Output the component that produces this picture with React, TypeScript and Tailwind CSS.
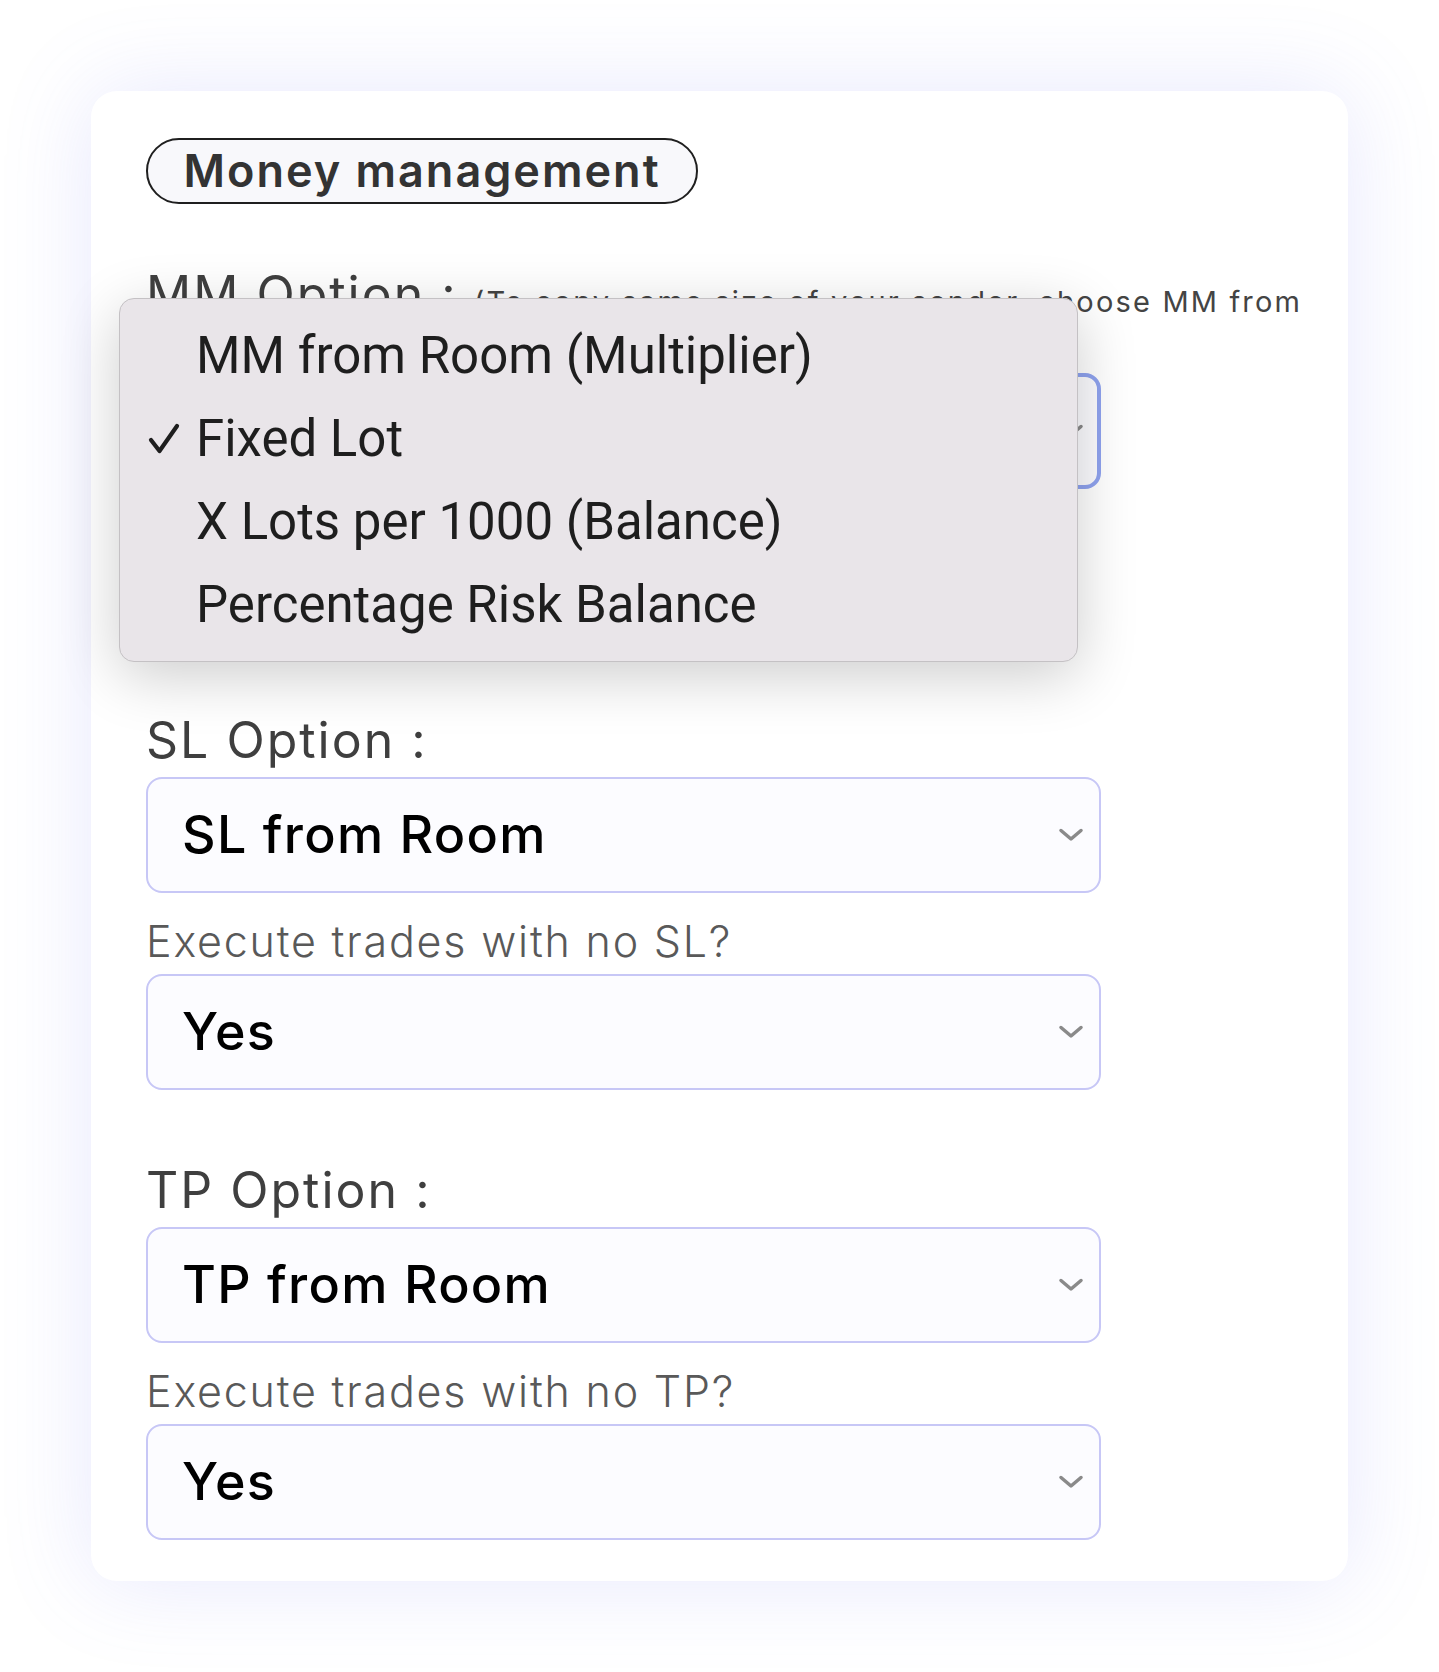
import React from 'react';

const formFont = { fontFamily: 'Inter, "Noto Sans", sans-serif' };
const menuFont = { fontFamily: 'Roboto, "Liberation Sans", sans-serif' };

const Chevron = () => (
  <svg width="26" height="16" viewBox="0 0 26 16" fill="none" className="shrink-0">
    <path d="M3 3.5 L13 12 L23 3.5" stroke="#8a8a8a" strokeWidth="3.5" strokeLinecap="round" strokeLinejoin="round" />
  </svg>
);

interface SelectBoxProps {
  value: string;
  focused?: boolean;
}

const SelectBox = ({ value, focused }: SelectBoxProps) => (
  <div
    className={
      focused
        ? 'flex h-[116px] w-[955px] items-center justify-between rounded-[16px] border-[4px] border-[#8fa3ef] bg-[#fcfcff] pl-[32px] pr-[13px]'
        : 'flex h-[116px] w-[955px] items-center justify-between rounded-[16px] border-2 border-[#c7c7f6] bg-[#fcfcff] pl-[34px] pr-[15px]'
    }
  >
    <span className="text-[52px] font-medium leading-none tracking-[0.025em] text-black">{value}</span>
    <Chevron />
  </div>
);

const OptionLabel = ({ children }: { children: React.ReactNode }) => (
  <div className="mb-[8px] h-[58px] text-[50px] leading-[58px] tracking-[0.04em] text-[#3f3f3f]">{children}</div>
);

const SubLabel = ({ children }: { children: React.ReactNode }) => (
  <div className="mb-[8px] mt-[23px] h-[50px] text-[43px] font-light leading-[50px] tracking-[1.8px] text-[#595959]">
    {children}
  </div>
);

const menuItems = [
  { label: 'MM from Room (Multiplier)', checked: false },
  { label: 'Fixed Lot', checked: true },
  { label: 'X Lots per 1000 (Balance)', checked: false },
  { label: 'Percentage Risk Balance', checked: false },
];

export default function App() {
  return (
    <div className="min-h-screen bg-white p-[91px]" style={formFont}>
      <div className="relative rounded-[26px] bg-white pb-[41px] pl-[55px] pr-[40px] pt-[47px] shadow-[0_0_90px_rgba(112,118,245,0.17)]">
        {/* titre de la section */}
        <div className="flex h-[66px] w-[552px] items-center justify-center rounded-full border-[2.5px] border-[#1f1f1f] bg-[#f8f8fb] text-[45px] font-semibold tracking-[2px] text-[#333]">
          Money management
        </div>

        {/* MM */}
        <div className="mt-[61px] flex h-[58px] items-baseline whitespace-nowrap">
          <span className="text-[50px] leading-[58px] tracking-[0.04em] text-[#3f3f3f]">MM Option :</span>
          <span className="ml-[16px] text-[29px] leading-[58px] tracking-[0.075em] text-[#444]">
            (To copy same size of your sender, choose MM from
          </span>
        </div>
        <div className="h-[50px] text-[29px] leading-[50px] tracking-[0.075em] text-[#444]">Room)</div>
        <SelectBox value="Fixed Lot" focused />

        {/* SL */}
        <div className="mt-[222px]">
          <OptionLabel>SL Option :</OptionLabel>
          <SelectBox value="SL from Room" />
          <SubLabel>Execute trades with no SL?</SubLabel>
          <SelectBox value="Yes" />
        </div>

        {/* TP */}
        <div className="mt-[71px]">
          <OptionLabel>TP Option :</OptionLabel>
          <SelectBox value="TP from Room" />
          <SubLabel>Execute trades with no TP?</SubLabel>
          <SelectBox value="Yes" />
        </div>

        {/* menu natif ouvert */}
        <div
          className="absolute left-[28px] top-[207px] w-[959px] rounded-[15px] border border-[#c4c1c4] bg-[#e9e5e9] py-[15px] shadow-[0_14px_60px_rgba(0,0,0,0.2)]"
          style={menuFont}
        >
          {menuItems.map((item) => (
            <div key={item.label} className="flex h-[83px] items-center pl-[28px] text-[51px] text-[#1e1e1e]">
              <span className="flex w-[48px] items-center">
                {item.checked ? (
                  <svg width="32" height="32" viewBox="0 0 32 32" fill="none">
                    <path d="M3 17 L11.5 28 L29 3" stroke="#1e1e1e" strokeWidth="4.2" strokeLinecap="round" strokeLinejoin="round" />
                  </svg>
                ) : null}
              </span>
              <span className="leading-none">{item.label}</span>
            </div>
          ))}
        </div>
      </div>
    </div>
  );
}
